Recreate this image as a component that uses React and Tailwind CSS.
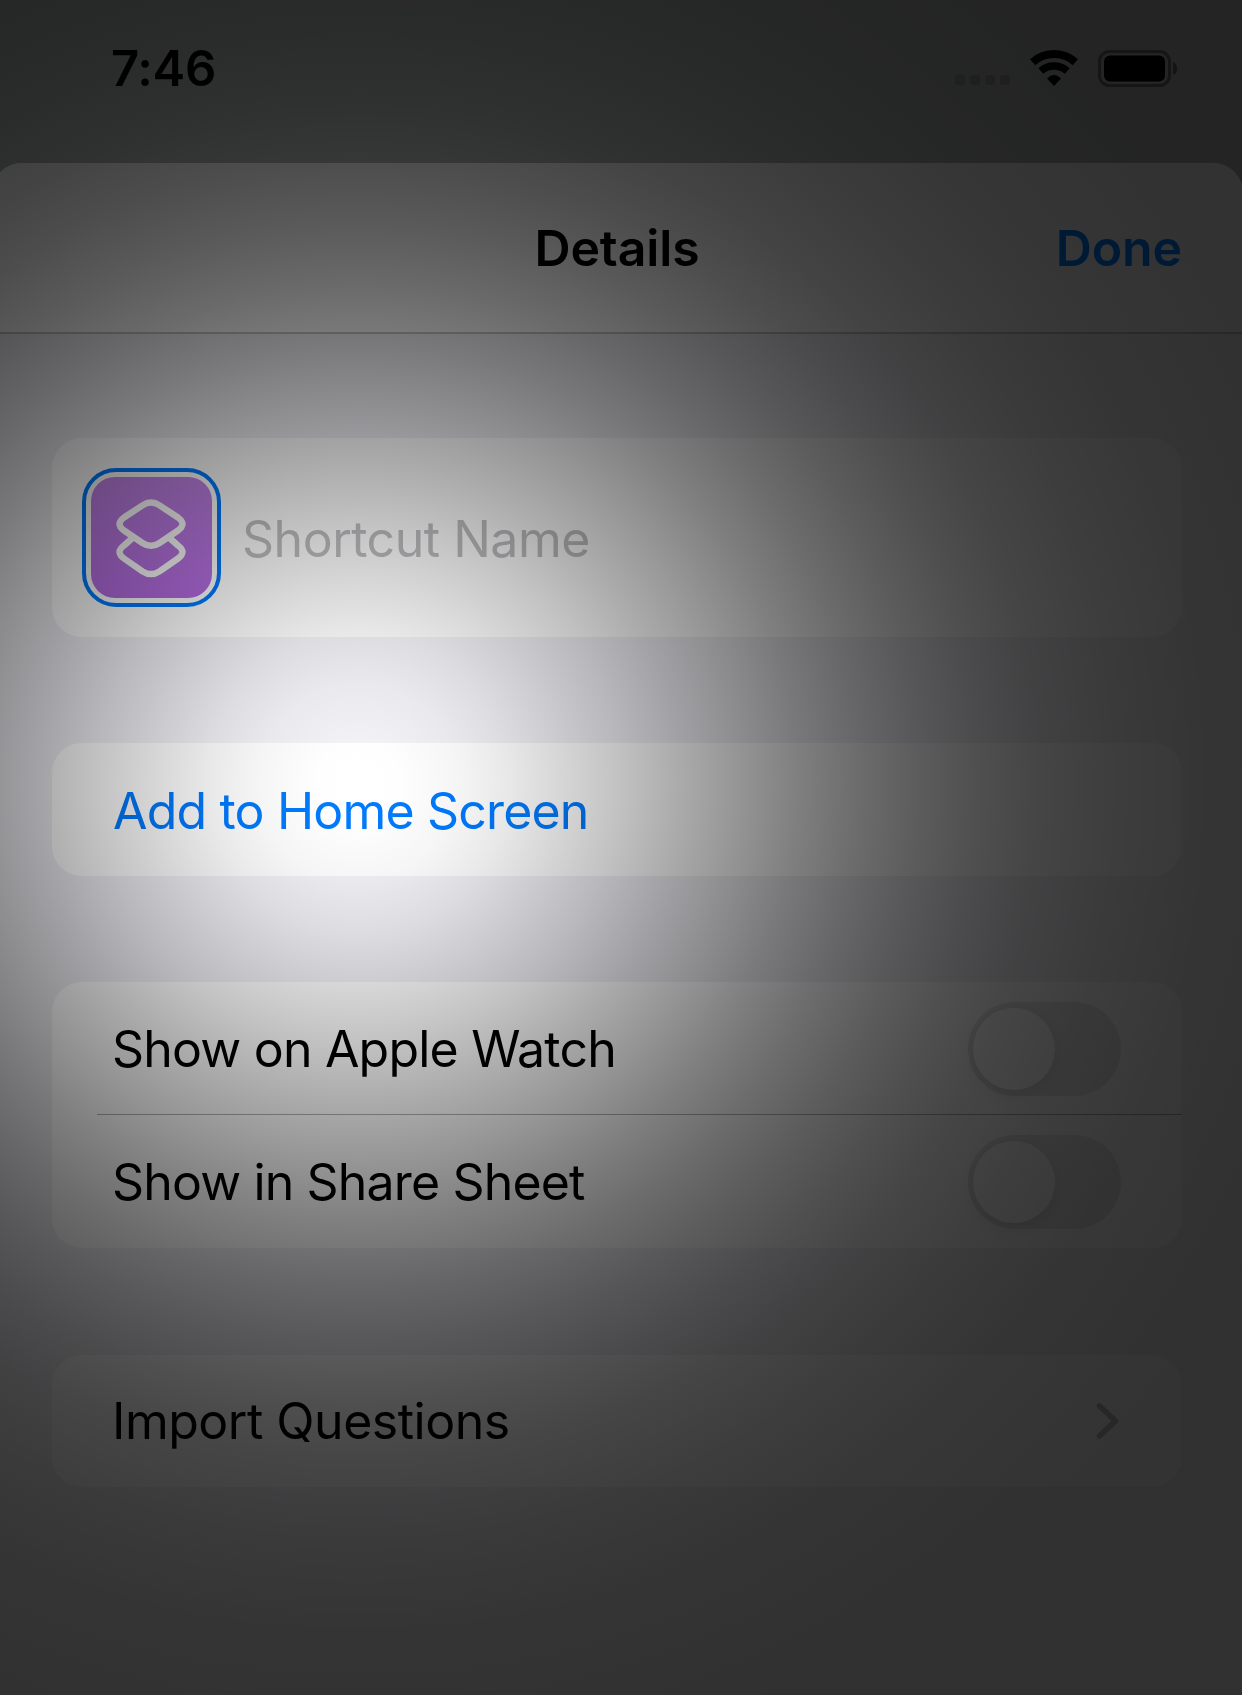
const rowText = "text-[50px] leading-none whitespace-nowrap";

function StatusBar() {
  return (
    <div className="flex h-[163px] items-start justify-between pl-[111px] pr-[64px] pt-[43px]">
      <div className="pt-px text-[49px] font-semibold leading-[50px] tracking-[-0.3px]">7:46</div>
      <div className="flex items-start pt-[7px]">
        <div className="mr-[20px] mt-[25px] flex gap-[5px]">
          {[0, 1, 2, 3].map((i) => (
            <span key={i} className="size-[10px] rounded-[3px] bg-[#3a2c32]/20" />
          ))}
        </div>
        <svg className="mr-[20px] h-[36px] w-[48px]" viewBox="0 0 48 36" fill="none" stroke="#000">
          <path d="M2.600 12.200A32 32 0 0 1 45.400 12.200" strokeWidth="8" />
          <path d="M10.800 21A20 20 0 0 1 37.200 21" strokeWidth="7.4" />
          <path d="M24 36L17 28.400Q24 21.600 31 28.400Z" fill="#000" stroke="none" />
        </svg>
        <svg className="h-[37px] w-[80px]" viewBox="0 0 80 37" fill="none">
          <rect x="1.500" y="1.500" width="70" height="34" rx="10" stroke="#000" strokeOpacity="0.4" strokeWidth="3" />
          <rect x="6" y="5.500" width="61" height="26" rx="6" fill="#000" />
          <path d="M75 12Q79 13.500 79 18.500Q79 23.500 75 25Z" fill="#000" fillOpacity="0.45" />
        </svg>
      </div>
    </div>
  );
}

function ShortcutIcon() {
  return (
    <div className="flex size-[139px] shrink-0 items-center justify-center rounded-[34px] border-4 border-[#007aff]">
      <div className="flex size-[121px] items-center justify-center rounded-[24px] bg-linear-to-b from-[#c284e8] to-[#b36be0]">
        <svg className="size-[121px]" viewBox="0.500 0 121 121" fill="none" stroke="#fff" strokeWidth="6.4" strokeLinejoin="round">
          <path d="M52 28.300Q60.500 22.700 69 28.300L87.500 40.500Q96.500 47 87.500 53.500L69 66Q60.500 71.700 52 66L33.500 53.500Q24.500 47 33.500 40.500Z" />
          <path d="M42 61L33.500 68.500Q24.500 75 33.500 81.500L52 94.300Q60.500 99.900 69 94.300L87.500 81.500Q96.500 75 87.500 68.500L79 61" />
        </svg>
      </div>
    </div>
  );
}

function Toggle() {
  return (
    <div className="flex h-[94px] w-[153px] shrink-0 items-center rounded-full bg-[#e8e8ea] px-[5px]">
      <div className="size-[82px] rounded-full bg-white shadow-[0_5px_16px_rgba(0,0,0,0.1)]" />
    </div>
  );
}

function Card({ className, children }) {
  return <section className={`flex flex-col rounded-[30px] bg-white ${className}`}>{children}</section>;
}

export default function App() {
  return (
    <div className="relative h-[1695px] w-[1242px] overflow-hidden bg-[#aeb3b1] font-['Inter',sans-serif] text-black">
      <StatusBar />
      <main className="-ml-2 h-[1532px] w-[1251px] overflow-hidden rounded-t-[30px] bg-[#f2f2f7]">
        <header className="grid h-[171px] grid-cols-3 items-center border-b-2 border-[#c4c4c7] bg-[#f9f9f9] pr-[61px] pl-[60px] text-[50px] font-semibold leading-none tracking-[-0.1px]">
          <span />
          <h1 className="text-center">Details</h1>
          <span className="text-right text-[#007aff]">Done</span>
        </header>
        <div className="flex flex-col pl-[60px] pr-[61px] pt-[104px]">
          <Card className="mb-[106px] h-[199px] justify-center">
            <div className="flex items-center pl-[30px]">
              <ShortcutIcon />
              <span className={`${rowText} pl-[21px] pt-[3px] tracking-[-0.5px] text-[#bfbfc2]`}>Shortcut Name</span>
            </div>
          </Card>
          <Card className="mb-[106px] h-[133px] justify-center pl-[61px]">
            <span className={`${rowText} pt-[2px] tracking-[-0.82px] text-[#007aff]`}>Add to Home Screen</span>
          </Card>
          <Card className="mb-[107px] h-[266px]">
            <div className="flex h-[132px] items-center justify-between pl-[60px] pr-[61px] pt-px">
              <span className={`${rowText} pt-px tracking-[-0.8px]`}>Show on Apple Watch</span>
              <Toggle />
            </div>
            <div className="ml-[45px] h-px bg-[#3c3c43]/40" />
            <div className="flex h-[133px] items-center justify-between pl-[60px] pr-[61px]">
              <span className={`${rowText} pt-px tracking-[-0.85px]`}>Show in Share Sheet</span>
              <Toggle />
            </div>
          </Card>
          <Card className="h-[132px] justify-center">
            <div className="flex items-center justify-between pl-[60px] pr-[63px]">
              <span className={`${rowText} tracking-[-0.5px]`}>Import Questions</span>
              <svg className="h-[36px] w-[23px]" viewBox="0 0 23 36" fill="none" stroke="#c0c0c3" strokeWidth="5.6" strokeLinecap="round" strokeLinejoin="round">
                <path d="M3.500 3L19.500 18L3.500 33" />
              </svg>
            </div>
          </Card>
        </div>
      </main>
      <div className="pointer-events-none absolute inset-0 bg-[radial-gradient(circle_at_358px_783px,rgba(0,0,0,0)_0px,rgba(0,0,0,0.005)_40px,rgba(0,0,0,0.04)_100px,rgba(0,0,0,0.09)_150px,rgba(0,0,0,0.155)_200px,rgba(0,0,0,0.24)_260px,rgba(0,0,0,0.33)_320px,rgba(0,0,0,0.415)_380px,rgba(0,0,0,0.5)_440px,rgba(0,0,0,0.575)_500px,rgba(0,0,0,0.64)_560px,rgba(0,0,0,0.69)_620px,rgba(0,0,0,0.728)_680px,rgba(0,0,0,0.762)_760px,rgba(0,0,0,0.785)_850px,rgba(0,0,0,0.8)_1000px)]" />
    </div>
  );
}
